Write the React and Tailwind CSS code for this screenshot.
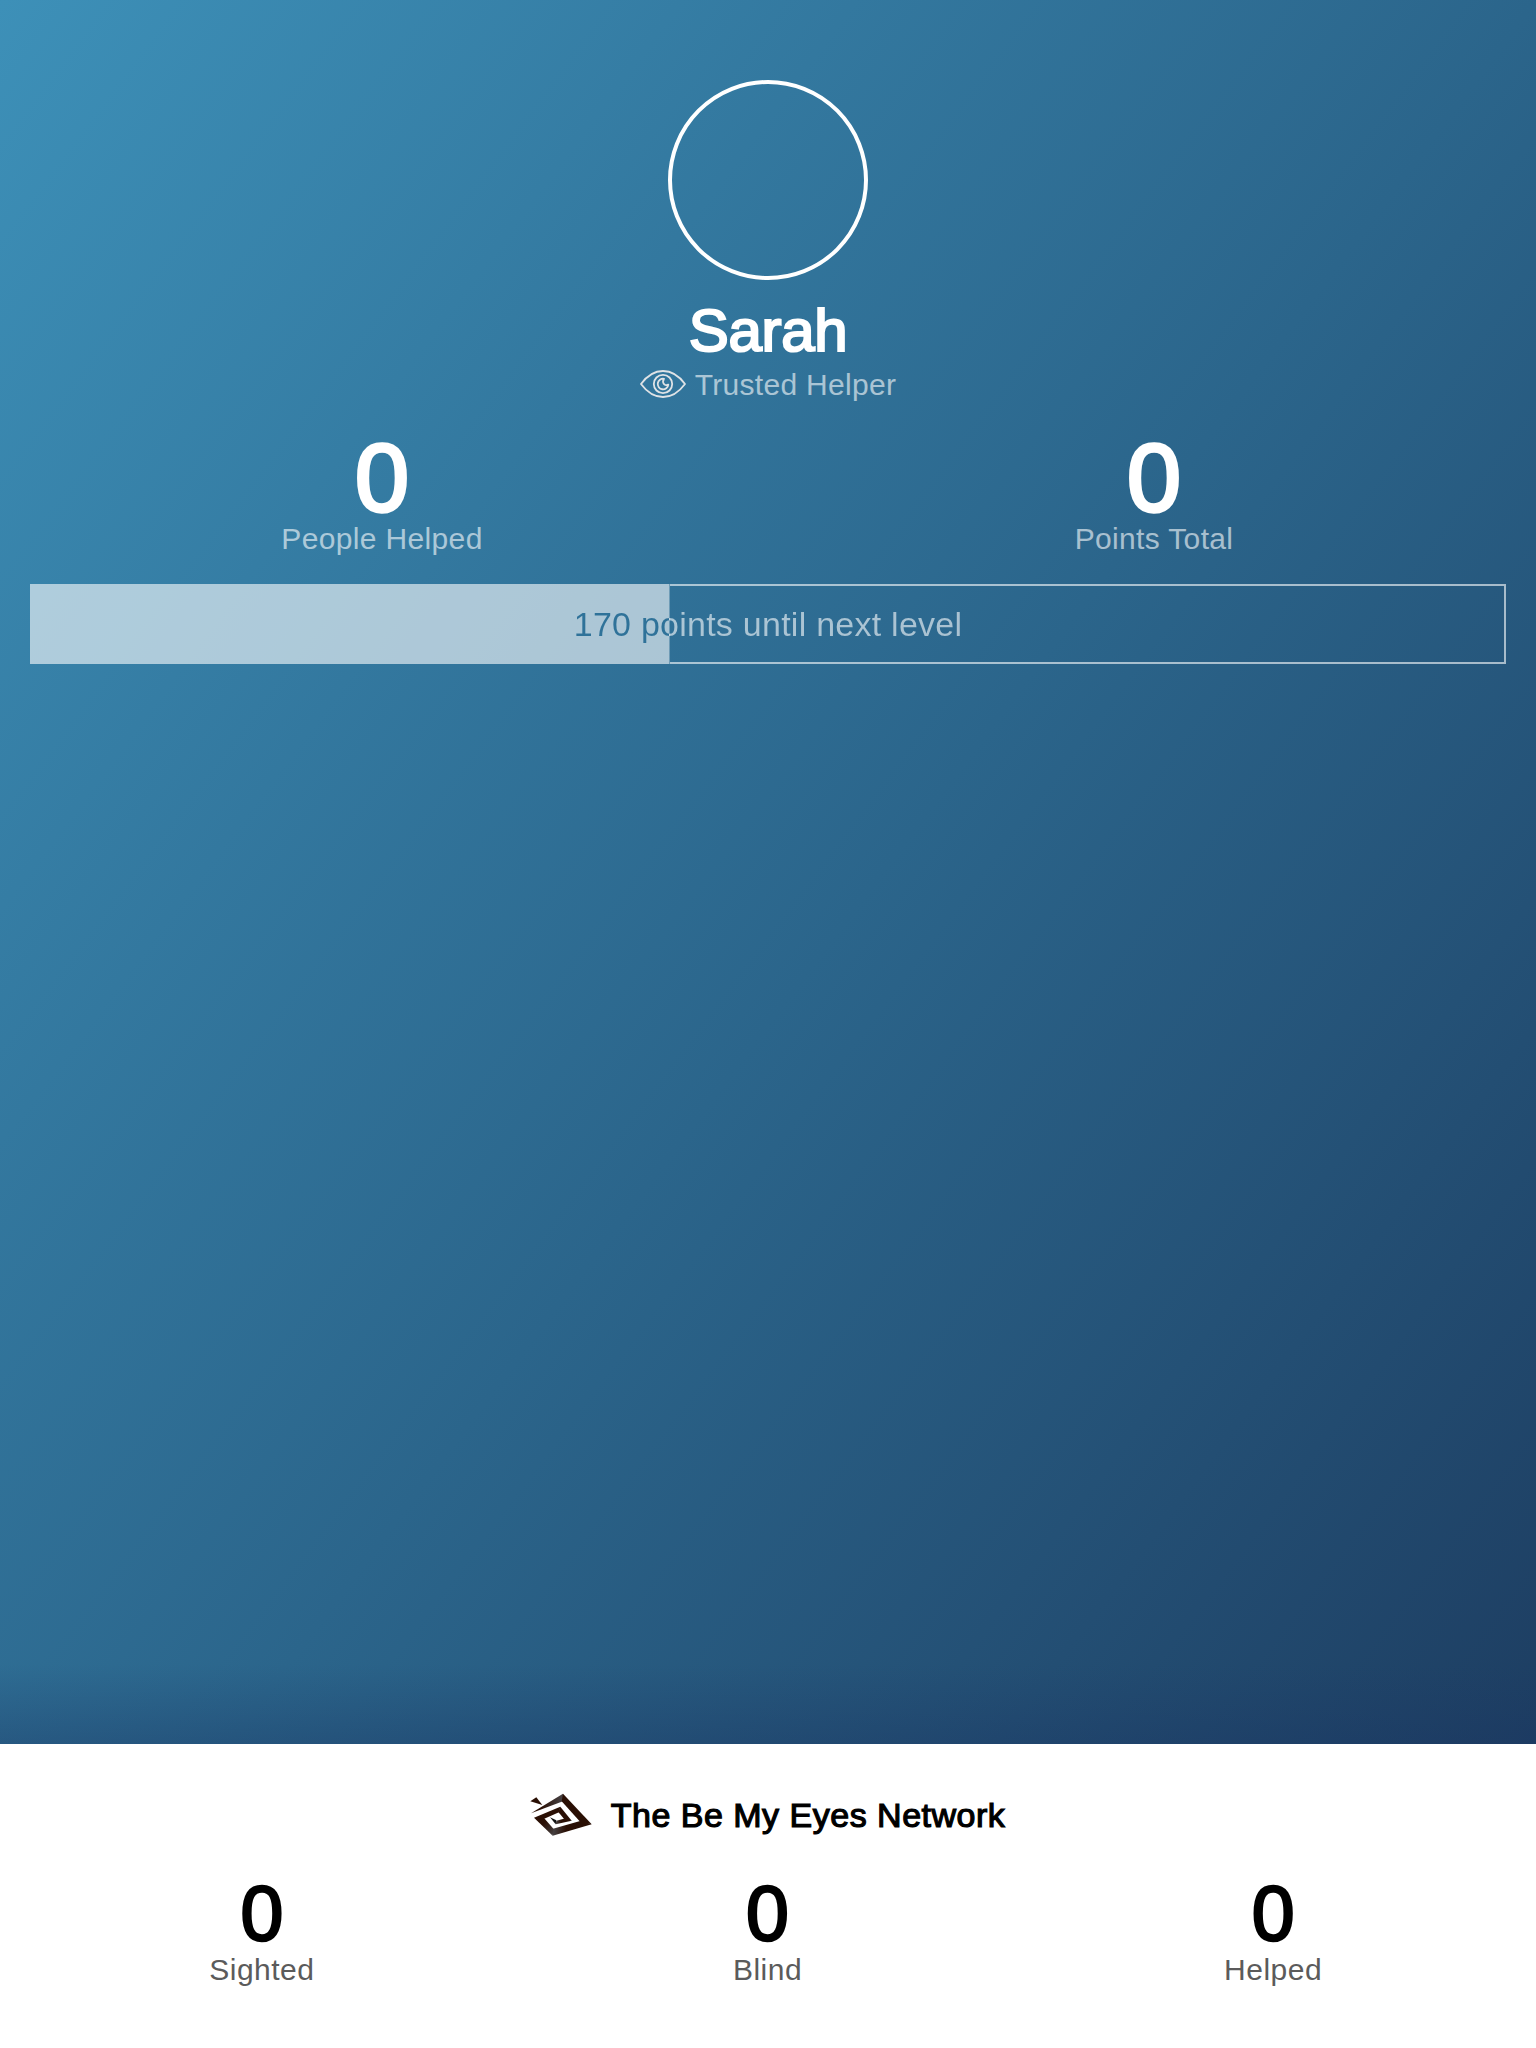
function Logo() {
  return (
    <svg className="mb-[2px] block h-[43px] w-[62px]" viewBox="27 39 186 129" fill="none">
      <defs>
        <linearGradient id="edge" x1="0" y1="0" x2="1" y2="0">
          <stop offset="0.3" stopColor="#2a0f04" />
          <stop offset="1" stopColor="#474345" />
        </linearGradient>
        <linearGradient id="foot" x1="0" y1="0" x2="1" y2="0">
          <stop offset="0" stopColor="#474345" />
          <stop offset="0.35" stopColor="#2a0f04" />
        </linearGradient>
        <linearGradient id="side" x1="0" y1="0" x2="1" y2="1">
          <stop offset="0.4" stopColor="#2a0f04" />
          <stop offset="1" stopColor="#474345" />
        </linearGradient>
      </defs>
      <path d="M28 64 46 52 64 75Z" fill="#2a0f04" />
      <path d="M30 100 126 41 126 64Z" fill="url(#edge)" />
      <path d="M126 41 212 133 178 126 122 64Z" fill="#2a0f04" />
      <path d="M212 133 95 167 96 146 180 122Z" fill="url(#foot)" />
      <path d="M95 167 39 113 69 114 98 147Z" fill="url(#side)" />
      <path d="M39 113 118 80 114 97 68 117Z" fill="#2a0f04" />
      <path d="M118 80 152 122 131 119 112 96Z" fill="#2a0f04" />
      <path d="M152 122 104 133 106 122 134 115Z" fill="url(#foot)" />
      <path d="M104 133 87 112 106 121Z" fill="#111" />
    </svg>
  );
}

function EyeIcon() {
  return (
    <svg className="block h-[28px] w-[46px]" viewBox="0 0 46 28" fill="none" stroke="#dfe3e6" strokeWidth="1.8">
      <path d="M1 14C8 4.500 15.500 1 23 1S38 4.500 45 14C38 23.500 30.500 27 23 27S8 23.500 1 14Z" strokeLinejoin="round" />
      <circle cx="23" cy="14" r="9.200" />
      <path d="M24 8.800A5.300 5.300 0 1 0 28.300 14.600C25.500 16.200 21.200 13.400 24 8.800Z" strokeLinejoin="round" />
    </svg>
  );
}

function HeroStat({ value, label }) {
  return (
    <div className="flex flex-col items-center">
      <div className="text-[97px] leading-[86px] text-white [-webkit-text-stroke:3.500px_white]">{value}</div>
      <div className="text-[30px] leading-[36px] tracking-[0.35px] text-white/60">{label}</div>
    </div>
  );
}

function NetworkStat({ value, label }) {
  return (
    <div className="flex flex-col items-center">
      <div className="text-[77px] leading-[77px] text-black [-webkit-text-stroke:2.5px_black]">{value}</div>
      <div className="text-[30px] leading-[36px] tracking-[0.5px] text-[#5b5b5b]">{label}</div>
    </div>
  );
}

export default function App() {
  return (
    <div className="flex h-[2048px] w-[1536px] flex-col overflow-hidden bg-[linear-gradient(to_bottom_right,#3d90b8_0%,#2b658b_50%,#1b375b_100%)] font-['Liberation_Sans',Arial,sans-serif]">
      <main className="flex h-[1744px] flex-col">
        <div className="flex flex-col items-center pt-[80px]">
          <div className="size-[200px] rounded-full border-4 border-white" />
          <h1 className="mt-[16px] text-[60px] leading-[70px] tracking-[-0.3px] text-white [-webkit-text-stroke:2.200px_white]">Sarah</h1>
          <div className="flex h-[36px] items-center gap-[9px]">
            <EyeIcon />
            <span className="mt-[2px] text-[30px] leading-[36px] tracking-[0.3px] text-white/60">Trusted Helper</span>
          </div>
        </div>
        <div className="mt-[33px] grid grid-cols-2 gap-x-2">
          <HeroStat value="0" label="People Helped" />
          <HeroStat value="0" label="Points Total" />
        </div>
        <div className="mx-[30px] mt-[27px] grid h-[80px]">
          <div className="col-start-1 row-start-1 flex">
            <div className="w-[639px] bg-white/60" />
            <div className="w-px bg-white/30" />
            <div className="flex-1 border-2 border-l-0 border-white/60" />
          </div>
          <div className="col-start-1 row-start-1 bg-[linear-gradient(to_right,#2f7299_639.500px,rgba(255,255,255,0.6)_639.500px)] bg-clip-text text-center text-[34px] leading-[80px] tracking-[0.25px] text-transparent">
            170 points until next level
          </div>
        </div>
        <div className="mt-auto h-[80px] bg-linear-to-b from-[#1a3562]/0 to-[#1a3562]/35" />
      </main>
      <footer className="flex flex-1 flex-col bg-white">
        <div className="mr-px mt-[47px] flex h-[48px] items-center justify-center gap-[19px]">
          <Logo />
          <h2 className="text-[34px] leading-[48px] tracking-[0.5px] text-black [-webkit-text-stroke:1.200px_black]">The Be My Eyes Network</h2>
        </div>
        <div className="ml-[9px] mr-[10px] mt-[36px] grid grid-cols-3">
          <NetworkStat value="0" label="Sighted" />
          <NetworkStat value="0" label="Blind" />
          <NetworkStat value="0" label="Helped" />
        </div>
      </footer>
    </div>
  );
}
